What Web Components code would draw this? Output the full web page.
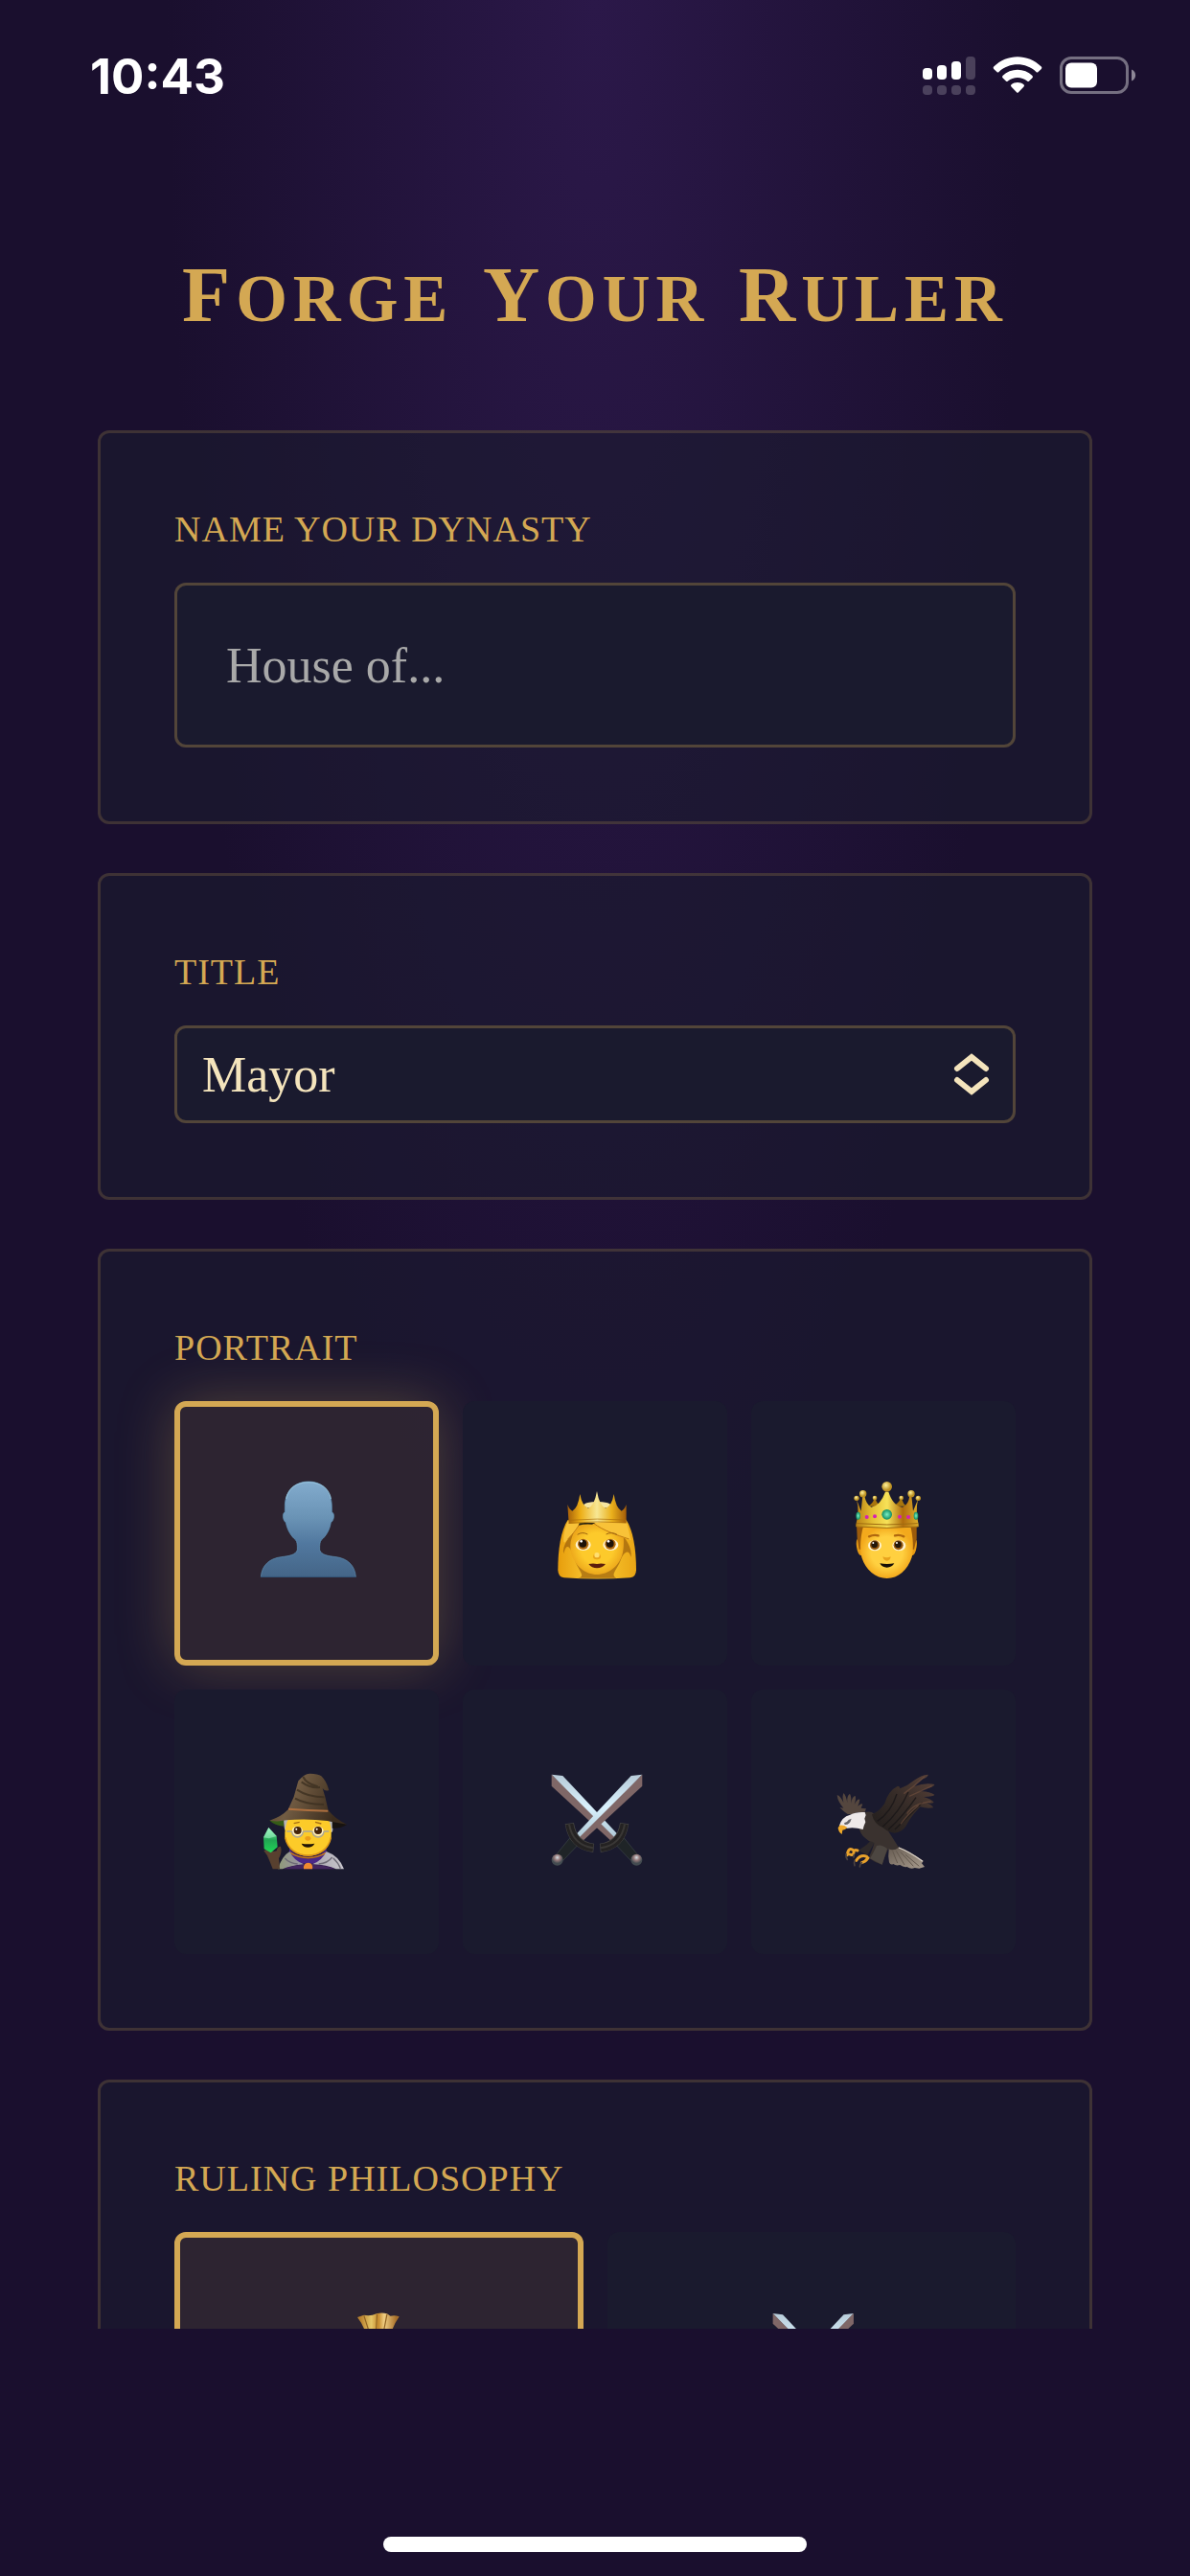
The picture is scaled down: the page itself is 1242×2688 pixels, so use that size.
<!DOCTYPE html>
<html lang="en">
<head>
<meta charset="utf-8">
<meta name="viewport" content="width=device-width, initial-scale=1">
<title>Forge Your Ruler</title>
<style>
  :root {
    --gold: #d4a853;
    --gold-10: rgba(212, 168, 83, 0.1);
    --gold-20: rgba(212, 168, 83, 0.2);
    --gold-30: rgba(212, 168, 83, 0.3);
    --cream: #f4e4bc;
    --night: #1a0f2e;
    --ink: #1a1a2e;
    --radius: 12px;
    --font-text: "Liberation Serif", "Times New Roman", serif;
    --font-system: Inter, "Liberation Sans", sans-serif;
  }

  body {
    margin: 0;
    background: var(--night);
    font-family: var(--font-text);
    color: var(--cream);
  }
</style>
</head>
<body>
<app-screen>
  <status-bar slot="top" time="10:43"></status-bar>
  <page-title>Forge Your Ruler</page-title>
  <form-card>
    <text-field label="NAME YOUR DYNASTY" placeholder="House of..."></text-field>
  </form-card>
  <form-card>
    <select-field label="TITLE" options="Mayor"></select-field>
  </form-card>
  <form-card>
    <choice-field label="PORTRAIT" columns="3">
      <choice-tile icon="person" name="Silhouette" selected></choice-tile>
      <choice-tile icon="princess" name="Princess"></choice-tile>
      <choice-tile icon="king" name="King"></choice-tile>
      <choice-tile icon="mage" name="Mage"></choice-tile>
      <choice-tile icon="swords" name="Swords"></choice-tile>
      <choice-tile icon="eagle" name="Eagle"></choice-tile>
    </choice-field>
  </form-card>
  <form-card>
    <choice-field label="RULING PHILOSOPHY" columns="2">
      <choice-tile icon="moneybag" name="Wealth" size="small" selected></choice-tile>
      <choice-tile icon="swords" name="Conquest" size="small"></choice-tile>
    </choice-field>
  </form-card>
  <home-indicator slot="bottom"></home-indicator>
</app-screen>

<script>
/** Full-height shell: status bar, clipped scroll area, bottom safe area. */
class AppScreen extends HTMLElement {
  constructor() {
    super();
    this.attachShadow({ mode: 'open' }).innerHTML = `
      <style>
        :host {
          display: flex;
          flex-direction: column;
          height: 100vh;
          background: radial-gradient(ellipse 36% 66% at 50% 0, #2b1849, var(--night)) no-repeat;
        }

        main {
          flex: 1;
          min-height: 0;
          overflow: hidden;
          display: flex;
          flex-direction: column;
          gap: 51px;
          padding: 0 102px;
        }
      </style>
      <slot name="top"></slot>
      <main><slot></slot></main>
      <slot name="bottom"></slot>
    `;
  }
}

class StatusBar extends HTMLElement {
  constructor() {
    super();
    this.attachShadow({ mode: 'open' }).innerHTML = `
      <style>
        :host {
          display: flex;
          align-items: center;
          justify-content: space-between;
          box-sizing: border-box;
          height: 158px;
          padding: 0 54px 0 94px;
          color: #fff;
          font: 700 51px/1 var(--font-system);
        }

        .icons {
          display: flex;
          align-items: center;
          gap: 18px;
        }

        svg {
          display: block;
        }
      </style>
      <time>${this.getAttribute('time') || ''}</time>
      <div class="icons">
        <svg width="55" height="42" viewBox="0 0 55 42" fill="#fff" aria-hidden="true">
          <rect x="0" y="13" width="10" height="12" rx="4"/>
          <rect x="15" y="10" width="10" height="15" rx="4"/>
          <rect x="30" y="6" width="10" height="19" rx="4"/>
          <g opacity="0.2">
            <rect x="45" y="1" width="10" height="24" rx="4"/>
            <rect x="0" y="31" width="10" height="10" rx="4"/>
            <rect x="15" y="31" width="10" height="10" rx="4"/>
            <rect x="30" y="31" width="10" height="10" rx="4"/>
            <rect x="45" y="31" width="10" height="10" rx="4"/>
          </g>
        </svg>
        <svg width="52" height="40" viewBox="0 0 52 40" fill="#fff" aria-hidden="true">
          <path d="M1.200 10.600C15-3.200 37-3.200 50.800 10.600Q51.800 11.800 50.800 12.900L47.600 16Q46.500 17 45.400 16C34.500 5.800 17.500 5.800 6.600 16Q5.500 17 4.400 16L1.200 12.900Q.2 11.800 1.200 10.600Z"/>
          <path d="M10.500 20C19 11.800 33 11.800 41.500 20Q42.500 21.200 41.500 22.300L38.200 25.600Q37.100 26.600 36 25.600C30.500 20.700 21.500 20.700 16 25.600Q14.900 26.600 13.800 25.600L10.500 22.300Q9.500 21.200 10.500 20Z"/>
          <path d="M19.500 29.300C23 26.300 29 26.300 32.500 29.300Q33.600 30.400 32.500 31.500L27 37.200Q26 38.200 25 37.200L19.500 31.500Q18.400 30.400 19.500 29.300Z"/>
        </svg>
        <svg width="82" height="40" viewBox="0 0 82 40" aria-hidden="true">
          <rect x="1.500" y="1.500" width="69" height="36" rx="10.500" fill="none" stroke="#fff" stroke-width="3" opacity="0.4"/>
          <rect x="6" y="6.500" width="33" height="26" rx="6" fill="#fff"/>
          <path d="M75 13.500C80.500 15.500 80.500 23.500 75 25.500Z" fill="#fff" opacity="0.5"/>
        </svg>
      </div>
    `;
  }
}

/** Heading in small capitals, each word led by a full capital. */
class PageTitle extends HTMLElement {
  constructor() {
    super();
    const words = this.textContent.trim().split(/\s+/);
    this.attachShadow({ mode: 'open' }).innerHTML = `
      <style>
        :host {
          display: block;
          padding: 79px 0 25px;
        }

        h1 {
          margin: 0;
          color: var(--gold);
          font-size: 98px;
          line-height: 130px;
          font-weight: 700;
          font-variant-caps: small-caps;
          letter-spacing: 6px;
          text-align: center;
          white-space: nowrap;
        }

        span {
          display: inline-block;
        }

        span::first-letter {
          font-size: 82px;
        }
      </style>
      <h1>${words.map((w) => `<span>${w}</span>`).join(' ')}</h1>
    `;
  }
}

class FormCard extends HTMLElement {
  constructor() {
    super();
    this.attachShadow({ mode: 'open' }).innerHTML = `
      <style>
        :host {
          display: block;
          flex-shrink: 0;
          padding: 77px;
          border: 3px solid var(--gold-20);
          border-radius: var(--radius);
          background: rgba(26, 26, 46, 0.6);
        }
      </style>
      <slot></slot>
    `;
  }
}

// shared by all three kinds of field
const fieldStyles = `
  :host {
    display: block;
  }

  .label {
    display: block;
    margin-bottom: 33px;
    color: var(--gold);
    font-size: 38px;
    line-height: 46px;
    letter-spacing: 1px;
  }

  .control {
    box-sizing: border-box;
    width: 100%;
    margin: 0;
    border: 3px solid var(--gold-30);
    border-radius: var(--radius);
    background: var(--ink);
    color: var(--cream);
    font-family: inherit;
    font-size: 52px;
    outline: none;
  }

  .control:focus-visible {
    border-color: var(--gold);
  }
`;

class TextField extends HTMLElement {
  constructor() {
    super();
    this.attachShadow({ mode: 'open' }).innerHTML = `
      <style>
        ${fieldStyles}

        input {
          display: block;
          height: 172px;
          padding: 0 51px;
        }

        input::placeholder {
          color: #a9a9a9;
          opacity: 1;
        }
      </style>
      <label class="label" for="field">${this.getAttribute('label')}</label>
      <input class="control" id="field" type="text" autocomplete="off"
        placeholder="${this.getAttribute('placeholder') || ''}">
    `;
  }

  get value() {
    return this.shadowRoot.querySelector('input').value;
  }
}

class SelectField extends HTMLElement {
  constructor() {
    super();
    const options = (this.getAttribute('options') || '').split(',');
    this.attachShadow({ mode: 'open' }).innerHTML = `
      <style>
        ${fieldStyles}

        .wrapper {
          display: grid;
          align-items: center;
        }

        select,
        svg {
          grid-area: 1 / 1;
        }

        select {
          appearance: none;
          height: 102px;
          padding: 0 90px 0 26px;
        }

        svg {
          justify-self: end;
          margin-right: 27px;
          pointer-events: none;
        }
      </style>
      <label class="label" for="field">${this.getAttribute('label')}</label>
      <div class="wrapper">
        <select class="control" id="field">
          ${options.map((o) => `<option>${o}</option>`).join('')}
        </select>
        <svg width="38" height="44" viewBox="0 0 38 44" fill="none" stroke="#f4e4bc" stroke-width="6" stroke-linecap="round" aria-hidden="true">
          <path d="M4 16L19 4L34 16M4 28L19 40L34 28"/>
        </svg>
      </div>
    `;
  }

  get value() {
    return this.shadowRoot.querySelector('select').value;
  }
}

/** Grid of tiles, one of which is selected. */
class ChoiceField extends HTMLElement {
  constructor() {
    super();
    this.attachShadow({ mode: 'open' }).innerHTML = `
      <style>
        ${fieldStyles}

        .grid {
          display: grid;
          grid-template-columns: repeat(${this.getAttribute('columns') || 3}, 1fr);
          gap: 25px;
        }
      </style>
      <div role="group" aria-labelledby="label">
        <span class="label" id="label">${this.getAttribute('label')}</span>
        <div class="grid"><slot></slot></div>
      </div>
    `;

    this.addEventListener('click', (e) => {
      const tile = e.target.closest('choice-tile');
      if (!tile) return;
      this.querySelectorAll('choice-tile').forEach((t) => t.toggleAttribute('selected', t === tile));
    });
  }
}

const ICONS = {
  person: `
    <svg viewBox="345 525 330 330">
      <defs><linearGradient id="a" x1="0" y1="0" x2="0" y2="1">
        <stop offset="0" stop-color="#82abcd"/><stop offset=".38" stop-color="#6a93b5"/>
        <stop offset=".65" stop-color="#51789f"/><stop offset="1" stop-color="#446587"/>
      </linearGradient></defs>
      <path fill="url(#a)" stroke="#5f93b6" stroke-width="2" d="M516 528C470 528 442 562 442 605V624C433 626 435 650 445 656C450 682 463 700 476 711Q482 718 481 742C476 758 455 761 430 764C393 769 370 790 367 826H664C661 790 638 769 603 764C577 761 556 758 551 742Q550 718 556 711C569 700 582 682 586 656C597 650 599 626 589 624V605C589 562 562 528 516 528Z"/>
      <path fill="none" stroke="#9ccbe3" stroke-width="4" opacity=".7" d="M446 582C452 550 478 530 516 530S580 550 586 582"/>
      <path stroke="#345577" stroke-width="4" d="M367 826H664"/>
    </svg>`,
  princess: `
    <svg viewBox="258 255 330 330">
      <defs>
        <linearGradient id="h" x1="0" y1="0" x2="1" y2="0">
          <stop offset="0" stop-color="#e79d0c"/><stop offset=".3" stop-color="#f5bd28"/>
          <stop offset=".7" stop-color="#f4bc26"/><stop offset="1" stop-color="#e9a515"/>
        </linearGradient>
        <linearGradient id="c" x1="0" y1="0" x2="1" y2="0">
          <stop offset="0" stop-color="#a65f08"/><stop offset=".22" stop-color="#edae16"/>
          <stop offset=".5" stop-color="#f7e794"/><stop offset=".75" stop-color="#eab01c"/><stop offset="1" stop-color="#a45c08"/>
        </linearGradient>
        <radialGradient id="f"><stop offset=".6" stop-color="#fdca2b"/><stop offset="1" stop-color="#eda81b"/></radialGradient>
      </defs>
      <path fill="url(#h)" d="M338 378C316 412 307 470 307 535Q307 556 326 559Q430 566 533 559Q552 556 552 535C552 470 542 410 521 378Z"/>
      <path fill="#8d5208" opacity=".6" d="M372 392C345 425 318 460 325 484C335 440 350 470 362 510C374 540 395 555 370 560H490C470 550 492 535 503 505C512 480 528 465 536 495C540 465 520 440 512 428Z"/>
      <path fill="url(#f)" d="M374 392C350 420 342 450 348 480C358 522 394 549 429 549S502 522 510 480C514 460 513 440 512 430L440 400L410 386Z"/>
      <path fill="#f8c238" d="M338 382Q400 380 374 392C360 420 345 428 330 448C320 455 325 410 338 382ZM412 386C450 410 490 425 535 442C530 415 525 395 520 382Z"/>
      <path fill="none" stroke="#c07a10" stroke-width="3" d="M374 392C360 415 350 425 338 438M418 388C450 412 490 425 530 438"/>
      <path fill="#2a2410" d="M374 387H424L414 392Q390 390 372 395Z"/>
      <ellipse cx="430" cy="332" rx="42" ry="11" fill="#f6e5a0"/>
      <path fill="url(#c)" d="M337 330Q344 347 352 350Q370 340 376 297Q382 334 402 341Q421 334 429 288Q437 334 456 341Q476 334 482 297Q488 340 506 350Q514 347 521 330V388Q429 382 341 390Z"/>
      <path fill="none" stroke="#a96c0a" stroke-width="2" d="M341 388Q429 380 521 387M340 379Q429 372 521 378"/>
      <path fill="none" stroke="#9c640f" stroke-width="3" d="M368 424Q383 414 400 423M458 423Q475 414 492 424"/>
      <ellipse cx="386" cy="456" rx="24" ry="18" fill="#fff3cf"/><ellipse cx="472" cy="456" rx="24" ry="18" fill="#fff3cf"/>
      <circle cx="386" cy="454" r="17" fill="#b36b10"/><circle cx="471" cy="454" r="17" fill="#b36b10"/>
      <circle cx="385" cy="452" r="12" fill="#1d1208"/><circle cx="470" cy="452" r="12" fill="#1d1208"/>
      <circle cx="380" cy="445" r="4" fill="#fff"/><circle cx="465" cy="445" r="4" fill="#fff"/>
      <ellipse cx="429" cy="493" rx="12" ry="9" fill="#e9a41a"/><circle cx="429" cy="488" r="8" fill="#ffdf70"/>
      <path fill="#5d1e0c" d="M403 516Q418 513 429 516Q441 513 456 516Q445 529 429 529T403 516Z"/>
    </svg>`,
  king: `
    <svg viewBox="261 255 330 330">
      <defs>
        <linearGradient id="c" x1="0" y1="0" x2="1" y2="0">
          <stop offset="0" stop-color="#b98013"/><stop offset=".25" stop-color="#e3bd32"/>
          <stop offset=".5" stop-color="#f7e258"/><stop offset=".75" stop-color="#b06d0d"/><stop offset="1" stop-color="#dfaf2c"/>
        </linearGradient>
        <radialGradient id="b" cx=".4" cy=".35"><stop offset="0" stop-color="#fff19a"/><stop offset="1" stop-color="#bd9122"/></radialGradient>
        <radialGradient id="g"><stop offset="0" stop-color="#7cf0c3"/><stop offset="1" stop-color="#108c62"/></radialGradient>
        <radialGradient id="f"><stop offset=".6" stop-color="#ffd040"/><stop offset="1" stop-color="#f3a91c"/></radialGradient>
      </defs>
      <path fill="#e69a13" d="M347 436Q339 440 342 462Q346 490 358 490L362 436ZM525 436Q533 440 530 462Q526 490 514 490L510 436Z"/>
      <path fill="#9b5b0b" d="M342 390H530V436L522 470H350L344 436Z"/>
      <path fill="url(#f)" d="M363 398C354 430 351 470 358 495C370 535 402 561 437 561S502 535 515 495C521 470 519 430 511 398Z"/>
      <path fill="#a8750e" d="M378 335Q394 325 396 314H402Q406 328 420 335ZM456 335Q474 325 478 314H484Q488 328 498 335Z"/>
      <circle cx="399" cy="309" r="7" fill="url(#b)"/><circle cx="482" cy="309" r="7" fill="url(#b)"/>
      <path fill="url(#c)" d="M342 314L356 350L361 302L367 303Q372 330 388 338Q416 334 432 290H442Q456 334 486 338Q505 330 508 302L514 303L519 350L534 314Q526 350 536 392V399Q437 407 340 399V392Q352 350 342 314Z"/>
      <path fill="none" stroke="#9f6c10" stroke-width="3" d="M341 399Q437 407 535 399M343 389Q437 397 533 389"/>
      <circle cx="437" cy="274" r="16" fill="url(#b)"/><circle cx="362" cy="296" r="11" fill="url(#b)"/><circle cx="513" cy="296" r="11" fill="url(#b)"/>
      <circle cx="342" cy="310" r="8" fill="url(#b)"/><circle cx="535" cy="310" r="8" fill="url(#b)"/>
      <circle cx="437" cy="361" r="16" fill="url(#g)"/><ellipse cx="347" cy="365" rx="7" ry="12" fill="url(#g)"/><ellipse cx="528" cy="365" rx="7" ry="12" fill="url(#g)"/>
      <g fill="#d520b4"><circle cx="374" cy="369" r="6"/><circle cx="399" cy="367" r="6"/><circle cx="477" cy="368" r="6"/><circle cx="504" cy="369" r="6"/></g>
      <path fill="none" stroke="#b0680e" stroke-width="7" stroke-linecap="round" d="M381 430Q396 423 410 427M462 427Q476 423 490 430"/>
      <ellipse cx="399" cy="458" rx="21" ry="17" fill="#fff3cf"/><ellipse cx="475" cy="458" rx="21" ry="17" fill="#fff3cf"/>
      <circle cx="399" cy="457" r="15" fill="#96590f"/><circle cx="473" cy="457" r="15" fill="#96590f"/>
      <circle cx="398" cy="455" r="10" fill="#22160a"/><circle cx="472" cy="455" r="10" fill="#22160a"/>
      <circle cx="394" cy="450" r="3" fill="#fff"/><circle cx="468" cy="450" r="3" fill="#fff"/>
      <path fill="#e8a31d" d="M424 493Q437 499 449 493Q447 506 437 506T424 493Z"/>
      <path fill="#191006" d="M415 514Q437 518 460 514Q452 527 437 527T415 514Z"/>
    </svg>`,
  mage: `
    <svg viewBox="255 258 330 330">
      <defs>
        <linearGradient id="h" x1="0" y1="0" x2="1" y2=".3">
          <stop offset="0" stop-color="#49391f"/><stop offset=".4" stop-color="#725c43"/><stop offset="1" stop-color="#3b2c1d"/>
        </linearGradient>
        <linearGradient id="g" x1="0" y1="0" x2="0" y2="1"><stop offset="0" stop-color="#8df0b5"/><stop offset=".5" stop-color="#21a653"/><stop offset="1" stop-color="#20d755"/></linearGradient>
        <linearGradient id="k" x1="0" y1="0" x2="1" y2="0"><stop offset="0" stop-color="#8f9a78"/><stop offset=".3" stop-color="#99959f"/><stop offset="1" stop-color="#c9c7ce"/></linearGradient>
      </defs>
      <path fill="#2d174b" d="M350 571L375 512H475L510 571Z"/>
      <path fill="#4a2888" d="M366 504C390 550 460 550 482 504V548Q424 562 366 545Z"/>
      <path fill="none" stroke="#c2761b" stroke-width="5" d="M368 520Q424 552 482 520"/>
      <path fill="url(#k)" d="M367 516Q343 530 330 571H345Q370 560 412 556Q380 545 367 516ZM482 516Q522 530 537 571H512Q484 558 438 556Q468 545 482 516Z"/>
      <path fill="none" stroke="#6d6a76" stroke-width="4" d="M352 537Q366 553 392 555M500 534Q486 553 458 555M503 536Q520 552 526 569"/>
      <path fill="#43265f" d="M349 571Q375 559 412 557H440Q480 559 509 571Z"/>
      <path fill="#f08a30" d="M411 571Q409 551 425 551T438 571Z"/>
      <path fill="#b9b8b8" d="M348 408H502V450Q495 470 488 430H362Q350 480 348 408Z"/>
      <path fill="#fccb29" d="M364 410Q350 440 352 470C360 512 392 530 424 530S490 512 497 470Q500 435 486 410Z"/>
      <path fill="none" stroke="#dc9717" stroke-width="5" d="M353 472C362 512 392 528 424 528S488 512 496 472"/>
      <path fill="#355c17" d="M304 419L348 414V437Q320 434 304 419Z"/><path fill="#171310" d="M500 412L546 432Q520 446 500 443Z"/>
      <path fill="url(#h)" d="M304 419Q340 408 362 385L380 345L394 295Q412 273 430 272Q456 272 466 280Q482 295 490 324Q478 329 470 318L478 345L488 387Q510 415 546 431Q500 424 485 420Q420 412 356 418Q330 424 304 419Z"/>
      <path fill="none" stroke="#3c3020" stroke-width="6" opacity=".8" d="M404 298Q430 318 462 315M390 323Q425 346 475 346M384 350Q415 368 474 369M409 282Q418 303 455 313"/>
      <path fill="none" stroke="#ae7040" stroke-width="6" d="M363 383Q424 388 487 389"/>
      <ellipse cx="391" cy="452" rx="17" ry="15" fill="#fff0c4"/><ellipse cx="456" cy="452" rx="17" ry="15" fill="#fff0c4"/>
      <circle cx="392" cy="450" r="12" fill="#452509"/><circle cx="456" cy="450" r="12" fill="#452509"/>
      <circle cx="388" cy="446" r="3" fill="#fff"/><circle cx="452" cy="446" r="3" fill="#fff"/>
      <path fill="none" stroke="#a8a69d" stroke-width="4" d="M358 453H374M409 453H438M474 453H490M374 453A17.500 18 0 0 0 409 453M438 453A18 18 0 0 0 474 453"/>
      <path fill="none" stroke="#a76e13" stroke-width="4" d="M380 428L398 424M447 424L466 429"/>
      <ellipse cx="424" cy="475" rx="9" ry="7" fill="#ec9e18"/>
      <path fill="#211405" d="M404 491Q424 495 445 491Q439 503 424 503T404 491Z"/>
      <path fill="#58402f" d="M286 514Q300 530 304 545L314 571H336L333 538Q344 518 339 500Q328 500 326 514Q305 520 300 507Z"/>
      <path fill="url(#g)" d="M301 441L326 468L329 502L308 520L287 508L285 472Z"/>
      <path fill="#b0ffd2" opacity=".5" d="M301 441L326 468L302 475L285 472Z"/>
    </svg>`,
  swords: `
    <svg viewBox="258 258 330 330">
      <defs>
        <linearGradient id="b" x1="0" y1="0" x2="0" y2="1"><stop offset="0" stop-color="#b7cbd8"/><stop offset=".5" stop-color="#d9f1fd"/><stop offset="1" stop-color="#adc6d4"/></linearGradient>
        <radialGradient id="p" cx=".5" cy=".3"><stop offset="0" stop-color="#d6e0e5"/><stop offset=".5" stop-color="#95797a"/><stop offset="1" stop-color="#434b50"/></radialGradient>
        <g id="s">
          <path fill="url(#b)" d="M571 275L536 279L362 464L378 479Z"/>
          <path fill="#7f6767" d="M571 275L571 311L387 481L374 472Z"/>
          <path fill="#1f2427" stroke="#3d4549" stroke-width="2" d="M344 474L367 498L323 544L303 524Z"/>
          <path fill="none" stroke="#454443" stroke-width="28" d="M343 428C350 474 374 500 419 505"/>
          <path fill="none" stroke="#242222" stroke-width="24" d="M343 430C350 474 374 500 417 505"/>
          <path fill="none" stroke="#3a3836" stroke-width="6" d="M342 431C350 476 375 499 417 505"/>
          <circle cx="305" cy="542" r="18" fill="url(#p)"/>
        </g>
      </defs>
      <use href="#s" transform="matrix(-1 0 0 1 858 0)"/>
      <use href="#s"/>
    </svg>`,
  eagle: `
    <svg viewBox="261 258 330 330">
      <defs>
        <linearGradient id="w" x1="0" y1="1" x2="1" y2="0"><stop offset="0" stop-color="#211d1c"/><stop offset=".5" stop-color="#352b27"/><stop offset="1" stop-color="#594239"/></linearGradient>
        <linearGradient id="t" x1="0" y1="0" x2="1" y2="1"><stop offset="0" stop-color="#655a50"/><stop offset="1" stop-color="#a89c8e"/></linearGradient>
      </defs>
      <path fill="#54463e" d="M314 399Q300 390 289 378L301 380Q283 360 281 340Q289 338 301 363Q296 340 302 333Q310 343 313 364Q310 342 321 335Q327 345 324 365Q329 342 338 342Q341 352 335 369Q345 350 352 353Q351 364 346 374Q357 364 361 368L356 380L372 382L368 392Q340 392 328 399Z"/>
      <path fill="url(#t)" d="M439 500L470 500Q510 515 551 546L546 553L555 564L538 569L524 567Q512 572 500 564Q488 566 478 558Q465 562 457 555Q448 560 444 550Q440 530 443 510Z"/>
      <path stroke="#dbd2c8" stroke-width="4" fill="none" d="M474 504Q510 518 549 547"/>
      <path fill="none" stroke="#63584e" stroke-width="3" d="M455 515L470 552M466 514L492 558M480 518L520 562M495 526L538 562"/>
      <path fill="#3a322f" d="M366 394Q385 388 398 398L440 450L474 503Q460 515 441 508Q430 530 422 557Q400 551 380 536Q390 515 397 492Q380 485 370 475Q352 460 350 440Z"/>
      <path fill="#2e292a" d="M385 484L398 489Q386 510 376 527L347 513Q370 500 385 484Z"/>
      <path fill="#4c4641" d="M405 498Q420 492 438 507Q430 533 422 557L384 538Q395 520 405 498Z"/>
      <path fill="url(#w)" d="M390 400Q416 388 430 365Q442 325 471 311Q478 312 478 319Q500 312 520 295Q545 276 566 275Q567 281 550 289Q530 302 522 312Q558 300 586 306Q587 312 562 319L538 328Q566 325 586 338Q584 344 552 345Q576 352 584 362Q578 367 562 364Q580 371 582 379Q562 383 541 376Q528 390 520 400L507 418L497 436Q485 456 462 458Q440 456 425 442Q396 430 390 400Z"/>
      <path fill="none" stroke="#181517" stroke-width="4" opacity=".8" d="M407 421Q450 393 468 336M424 438Q475 395 504 330M442 447Q490 403 528 347M462 447Q505 405 548 363"/>
      <path fill="none" stroke="#72503d" stroke-width="4" opacity=".6" d="M490 335Q525 310 555 281M507 343L578 311M500 398Q520 365 575 360M480 430Q505 397 536 373"/>
      <path fill="#eee9e9" d="M288 435Q295 408 322 401Q340 391 368 393L371 402L367 413L370 424L365 436L362 447Q335 439 313 443L302 441Z"/>
      <path fill="#666569" d="M303 426Q311 427 317 417L326 413Q321 433 305 432Z"/>
      <path fill="#efa929" d="M289 434Q302 432 313 441Q306 449 298 449L296 462Q285 456 284 442Z"/>
      <path fill="none" stroke="#e8a12b" stroke-width="9" stroke-linecap="round" d="M345 513Q333 508 333 520Q330 530 321 525M333 513Q316 500 313 527M378 536Q370 548 358 551M374 532Q355 524 341 544"/>
      <path fill="none" stroke="#4b4240" stroke-width="5" stroke-linecap="round" d="M309 524Q307 534 313 541M336 545Q333 553 336 560M358 551Q352 556 352 564M334 526L333 534"/>
    </svg>`,
  moneybag: `
    <svg viewBox="258 258 330 330">
      <defs><linearGradient id="m" x1="0" y1="0" x2="1" y2="0">
        <stop offset="0" stop-color="#b9822f"/><stop offset=".25" stop-color="#b9822f"/><stop offset=".4" stop-color="#e5c667"/>
        <stop offset=".5" stop-color="#c58a2c"/><stop offset=".58" stop-color="#f0cf83"/><stop offset=".75" stop-color="#a8702a"/>
      </linearGradient></defs>
      <path fill="url(#m)" d="M349 288L372 281Q395 286 416 276Q435 271 453 276L465 284Q481 280 496 286Q474 318 466 350Q540 400 548 490Q552 568 423 570Q294 568 298 490Q306 400 380 350Q370 315 349 288Z"/>
      <path stroke="#8f6221" stroke-width="4" fill="none" d="M372 283L392 345M418 278L414 345M453 278L440 345M384 350H462"/>
    </svg>`,
};

class ChoiceTile extends HTMLElement {
  constructor() {
    super();
    this.attachShadow({ mode: 'open' }).innerHTML = `
      <style>
        :host {
          display: block;
        }

        button {
          display: flex;
          align-items: center;
          justify-content: center;
          box-sizing: border-box;
          width: 100%;
          aspect-ratio: 1;
          padding: 0;
          border: 6px solid transparent;
          border-radius: var(--radius);
          background: var(--ink);
          cursor: pointer;
        }

        :host([selected]) button {
          border-color: var(--gold);
          background: var(--gold-10);
          box-shadow: 0 0 60px var(--gold-30);
        }

        svg {
          display: block;
          width: 110px;
          height: 110px;
        }

        :host([size="small"]) button {
          aspect-ratio: auto;
          height: 340px;
          align-items: flex-start;
          padding-top: 74px;
          box-shadow: none;
        }

        :host([size="small"]) svg {
          width: 98px;
          height: 98px;
        }
      </style>
      <button type="button" aria-label="${this.getAttribute('name')}">
        ${ICONS[this.getAttribute('icon')]}
      </button>
    `;
  }

  static get observedAttributes() {
    return ['selected'];
  }

  attributeChangedCallback(name, oldVal, newVal) {
    this.shadowRoot.querySelector('button').setAttribute('aria-pressed', String(newVal !== null));
  }
}

class HomeIndicator extends HTMLElement {
  constructor() {
    super();
    this.attachShadow({ mode: 'open' }).innerHTML = `
      <style>
        :host {
          display: flex;
          align-items: flex-end;
          justify-content: center;
          box-sizing: border-box;
          height: 258px;
          padding-bottom: 25px;
        }

        div {
          width: 442px;
          height: 16px;
          border-radius: 8px;
          background: #fff;
        }
      </style>
      <div></div>
    `;
  }
}

customElements.define('app-screen', AppScreen);
customElements.define('status-bar', StatusBar);
customElements.define('page-title', PageTitle);
customElements.define('form-card', FormCard);
customElements.define('text-field', TextField);
customElements.define('select-field', SelectField);
customElements.define('choice-field', ChoiceField);
customElements.define('choice-tile', ChoiceTile);
customElements.define('home-indicator', HomeIndicator);
</script>
</body>
</html>
